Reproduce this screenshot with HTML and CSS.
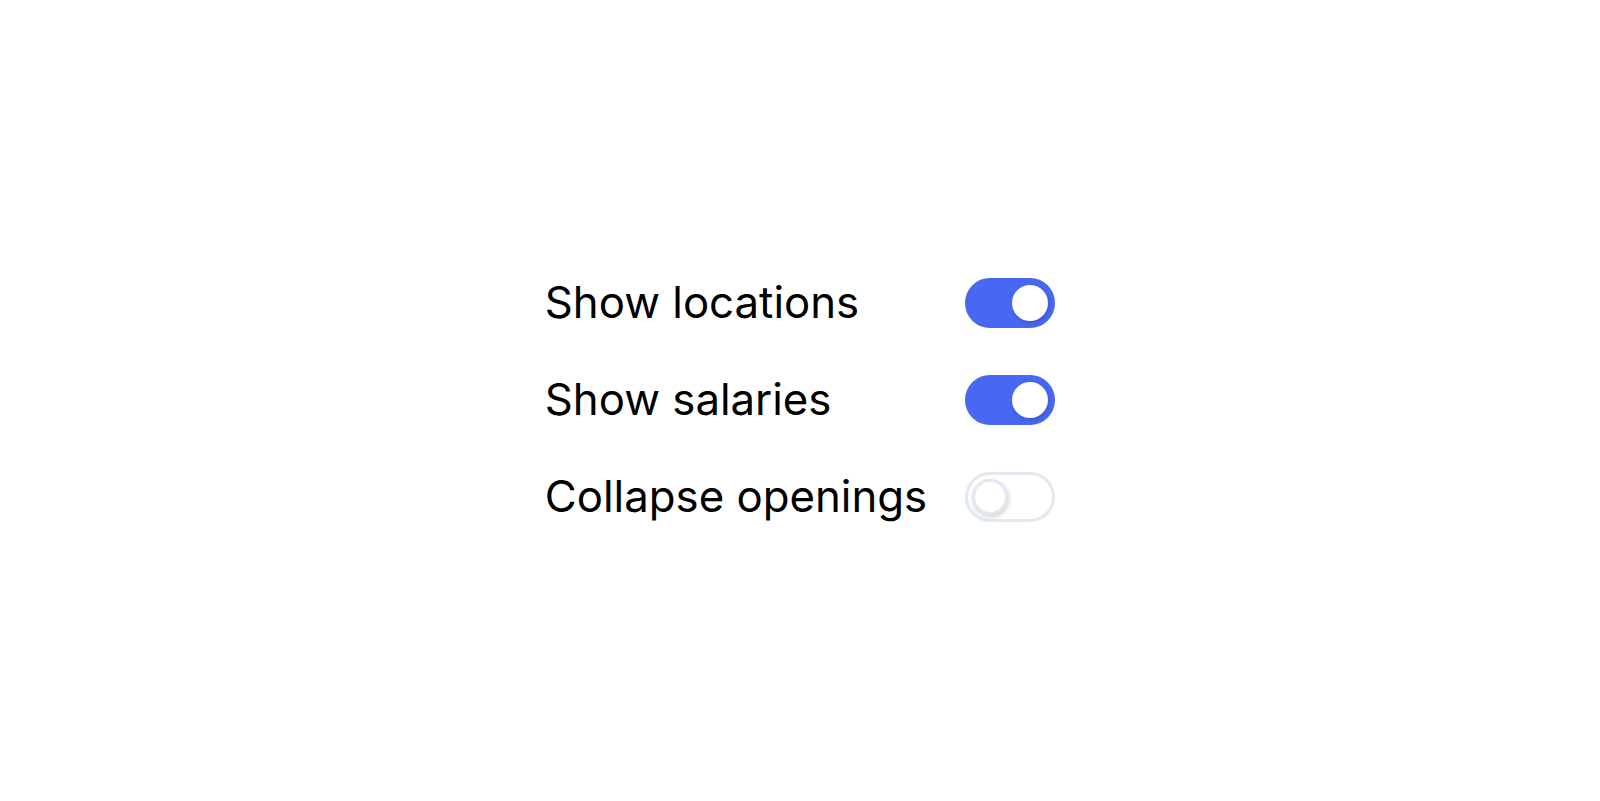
FILE: index.html
```html
<!DOCTYPE html>
<html lang="en">
<head>
<meta charset="utf-8">
<title>Settings</title>
<link rel="stylesheet" href="styles.css">
</head>
<body>
<main class="page">
  <div class="settings">
    <span class="label">Show locations</span>
    <span class="toggle toggle-on" role="switch" aria-checked="true"><span class="knob"></span></span>
    <span class="label">Show salaries</span>
    <span class="toggle toggle-on" role="switch" aria-checked="true"><span class="knob"></span></span>
    <span class="label">Collapse openings</span>
    <span class="toggle toggle-off" role="switch" aria-checked="false"><span class="knob"></span></span>
  </div>
</main>
</body>
</html>
```

FILE: styles.css
```css
html, body {
  margin: 0;
  padding: 0;
  background: #ffffff;
}

.page {
  width: 100vw;
  height: 100vh;
  display: flex;
  align-items: center;
  justify-content: center;
}

.settings {
  display: grid;
  grid-template-columns: auto auto;
  column-gap: 38px;
  row-gap: 47px;
  align-items: center;
  font-family: Inter, "Noto Sans", sans-serif;
  margin-top: -2px;
}

.label {
  font-size: 43.75px;
  line-height: 50px;
  color: #000000;
}

.toggle {
  box-sizing: border-box;
  width: 90px;
  height: 50px;
  border-radius: 25px;
  border: 3px solid;
  padding: 4px;
  display: flex;
  align-items: center;
}

.toggle-on {
  background: #4868f4;
  border-color: #4868f4;
  justify-content: flex-end;
}

.toggle-off {
  background: #ffffff;
  border-color: #e2e8f0;
  justify-content: flex-start;
}

.knob {
  box-sizing: border-box;
  width: 36px;
  height: 36px;
  border-radius: 50%;
  background: #ffffff;
  box-shadow: 1px 2px 4px rgba(0, 0, 0, 0.18);
}

.toggle-off .knob {
  border: 3px solid #e2e8f0;
}
```
